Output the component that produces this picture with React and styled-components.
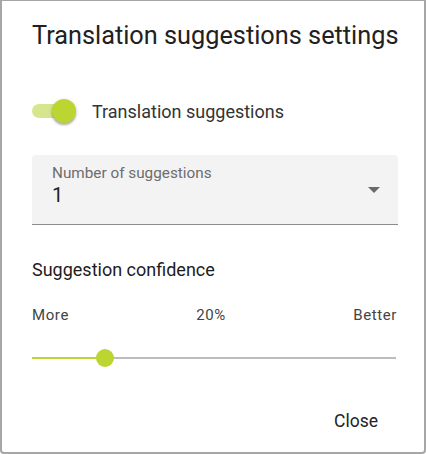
import React from "react";
import styled, { createGlobalStyle } from "styled-components";

const GlobalStyle = createGlobalStyle`
  html, body {
    margin: 0;
    padding: 0;
    background: #ffffff;
  }
  body {
    font-family: Roboto, "Liberation Sans", sans-serif;
  }
`;

const Dialog = styled.div`
  box-sizing: border-box;
  width: 426px;
  height: 454px;
  border: 2px solid #a6a6a6;
  border-top-width: 1px;
  border-radius: 0 0 4px 4px;
  background: #fff;
  display: flex;
  flex-direction: column;
  padding: 1px 28px 0 30px;
  color: #222;
`;

const Title = styled.h2`
  margin: 0;
  padding-top: 18px;
  font-size: 25.3px;
  font-weight: 400;
  line-height: 32px;
  color: #212121;
  white-space: nowrap;
`;

const SwitchRow = styled.label`
  display: flex;
  align-items: center;
  gap: 14px;
  margin-top: 44px;
  height: 30px;
  font-size: 18px;
  color: #333;
`;

const Track = styled.span`
  position: relative;
  width: 46px;
  height: 30px;
  display: inline-flex;
  align-items: center;
  &::before {
    content: "";
    width: 34px;
    height: 14px;
    border-radius: 7px;
    background: #d6e68e;
  }
`;

const Thumb = styled.span`
  position: absolute;
  left: 20px;
  top: 3px;
  width: 24px;
  height: 24px;
  border-radius: 50%;
  background: #bcd531;
  box-shadow: 0 2px 2px rgba(0, 0, 0, 0.25), 0 1px 4px rgba(0, 0, 0, 0.15);
`;

const Field = styled.div`
  margin: 29px -2px 0 0;
  height: 70px;
  box-sizing: border-box;
  background: #f3f3f3;
  border-radius: 4px 4px 0 0;
  border-bottom: 1px solid #8c8c8c;
  padding: 9px 18px 0 20px;
  display: flex;
  align-items: flex-start;
`;

const FieldText = styled.div`
  flex: 1;
  display: flex;
  flex-direction: column;
`;

const FieldLabel = styled.span`
  font-size: 15.3px;
  line-height: 18px;
  color: #6d6d6d;
`;

const FieldValue = styled.span`
  font-size: 20px;
  line-height: 24px;
  color: #222;
  margin-top: 1px;
`;

const Arrow = styled.span`
  width: 0;
  height: 0;
  border-left: 6.5px solid transparent;
  border-right: 6.5px solid transparent;
  border-top: 6px solid #6a6a6a;
  margin-top: 23px;
`;

const SectionTitle = styled.div`
  margin-top: 35px;
  font-size: 18px;
  font-weight: 400;
  color: #1c1c1c;
  line-height: 20px;
`;

const ScaleRow = styled.div`
  margin-top: 26px;
  display: grid;
  grid-template-columns: 1fr auto 1fr;
  font-size: 15px;
  letter-spacing: 0.6px;
  color: #444;
  line-height: 18px;
  & > span:nth-child(2) {
    margin-right: 6px;
  }
  & > span:last-child {
    text-align: right;
    margin-right: -1px;
  }
`;

const Slider = styled.div`
  position: relative;
  margin-top: 24px;
  height: 20px;
  display: flex;
  align-items: center;
`;

const Rail = styled.div`
  flex: 1;
  height: 2px;
  background: #bdbdbd;
  position: relative;
`;

const Fill = styled.div`
  position: absolute;
  left: 0;
  top: 0;
  height: 2px;
  background: #bcd531;
`;

const Knob = styled.div`
  position: absolute;
  top: 50%;
  width: 18px;
  height: 18px;
  margin: -9px 0 0 -9px;
  border-radius: 50%;
  background: #bcd531;
`;

const Actions = styled.div`
  margin-top: auto;
  display: flex;
  justify-content: flex-end;
  padding: 0 0 13px;
`;

const Button = styled.button`
  border: none;
  background: none;
  font-family: inherit;
  font-size: 17.5px;
  color: #222;
  padding: 8px 18px;
  cursor: pointer;
`;

export default function App() {
  const pct = 20;
  return (
    <>
      <GlobalStyle />
      <Dialog>
        <Title>Translation suggestions settings</Title>
        <SwitchRow>
          <Track>
            <Thumb />
          </Track>
          Translation suggestions
        </SwitchRow>
        <Field>
          <FieldText>
            <FieldLabel>Number of suggestions</FieldLabel>
            <FieldValue>1</FieldValue>
          </FieldText>
          <Arrow />
        </Field>
        <SectionTitle>Suggestion confidence</SectionTitle>
        <ScaleRow>
          <span>More</span>
          <span>{pct}%</span>
          <span>Better</span>
        </ScaleRow>
        <Slider>
          <Rail>
            <Fill style={{ width: `${pct}%` }} />
            <Knob style={{ left: `${pct}%` }} />
          </Rail>
        </Slider>
        <Actions>
          <Button>Close</Button>
        </Actions>
      </Dialog>
    </>
  );
}
